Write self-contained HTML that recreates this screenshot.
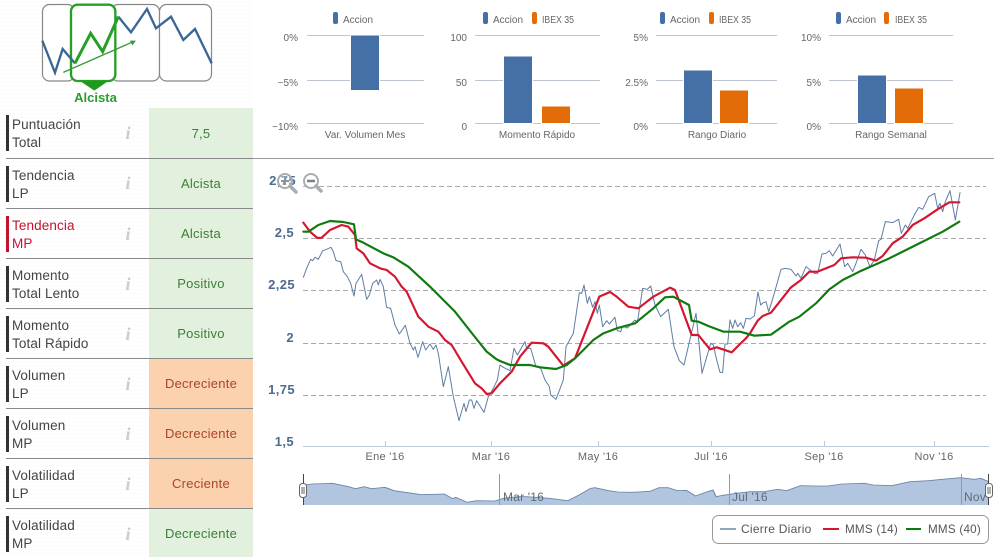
<!DOCTYPE html>
<html><head><meta charset="utf-8"><style>
html,body{margin:0;padding:0;background:#fff;width:996px;height:557px;overflow:hidden}
svg{display:block;font-family:"Liberation Sans",sans-serif}
.l{font-size:13.5px;fill:#444;letter-spacing:.12px}
.r{fill:#c0142f}
.v{font-size:13px;text-anchor:middle;letter-spacing:.25px}
.g{fill:#3c7f36}.o{fill:#a9452c}
.i{font-family:"Liberation Serif",serif;font-style:italic;font-weight:bold;font-size:18px;fill:#ccc;text-anchor:middle}
.m{font-size:10px;fill:#666}
.e{text-anchor:end}.c{text-anchor:middle}
.y{font-size:13px;font-weight:bold;fill:#4d6b8e;text-anchor:end;letter-spacing:.4px}
.x{font-size:11px;fill:#666;text-anchor:middle;letter-spacing:.3px}
.t{font-size:12px;fill:#555;letter-spacing:.25px}
</style></head><body>
<svg width="996" height="557" viewBox="0 0 996 557" xmlns="http://www.w3.org/2000/svg">
<defs><pattern id="d" width="4" height="4" patternUnits="userSpaceOnUse"><rect x="1" y="1" width="1" height="1" fill="#f3f3f3"/></pattern></defs>
<rect x="0" y="0" width="253" height="557" fill="url(#d)"/>

<!-- top icon -->
<g fill="#fff" stroke="#888" stroke-width="1.2">
<rect x="42.5" y="4.5" width="32" height="76.500" rx="7"/>
<rect x="111" y="4.500" width="48.500" height="76.500" rx="7"/>
<rect x="159.500" y="4.500" width="52" height="76.500" rx="7"/>
</g>
<g transform="scale(.33333)" fill="none" stroke-linejoin="miter">
<rect x="213" y="14" width="133" height="229" rx="20" fill="#fff" stroke="#25a025" stroke-width="7"/>
<path d="M127,122 165,218 188,147 225,190M355,50 393,97 441,27 468,85 513,50 550,120 585,87 635,190" stroke="#3a6796" stroke-width="7"/>
<path d="M225,190 272,100 308,155 355,50" stroke="#25a025" stroke-width="9"/>
<path d="M190,217 400,125" stroke="#3a9a3a" stroke-width="4"/>
<path d="M408,122 390,122 397,136z" fill="#3a9a3a"/>
<path d="M240,243 325,243 283,272z" fill="#1f9a1f"/>
</g>
<text x="95.500" y="102" font-size="13" font-weight="bold" fill="#2d9a2d" text-anchor="middle">Alcista</text>

<!-- value cells -->
<rect x="149" y="108" width="104" height="250" fill="#e2f0de"/>
<rect x="149" y="358" width="104" height="150" fill="#fcd1ae"/>
<rect x="149" y="508" width="104" height="49" fill="#e2f0de"/>

<g stroke="#8a8a8a" stroke-width="1">
<path d="M6,158.500H253M6,208.500H253M6,258.500H253M6,308.500H253M6,358.500H253M6,408.500H253M6,458.500H253M6,508.500H253"/>
<path d="M253,158.500H994" stroke="#999"/>
</g>
<g fill="#333">
<rect x="6" y="115" width="3" height="36"/><rect x="6" y="166" width="3" height="36"/>
<rect x="6" y="266" width="3" height="36"/><rect x="6" y="316" width="3" height="36"/>
<rect x="6" y="366" width="3" height="36"/><rect x="6" y="416" width="3" height="36"/>
<rect x="6" y="466" width="3" height="36"/><rect x="6" y="516" width="3" height="36"/>
</g>
<rect x="6" y="216" width="3" height="36" fill="#c0142f"/>

<text class="l" x="12" y="129">Puntuación</text><text class="l" x="12" y="147">Total</text>
<text class="l" x="12" y="180">Tendencia</text><text class="l" x="12" y="198">LP</text>
<text class="l r" x="12" y="230">Tendencia</text><text class="l r" x="12" y="248">MP</text>
<text class="l" x="12" y="280">Momento</text><text class="l" x="12" y="298">Total Lento</text>
<text class="l" x="12" y="330">Momento</text><text class="l" x="12" y="348">Total Rápido</text>
<text class="l" x="12" y="380">Volumen</text><text class="l" x="12" y="398">LP</text>
<text class="l" x="12" y="430">Volumen</text><text class="l" x="12" y="448">MP</text>
<text class="l" x="12" y="480">Volatilidad</text><text class="l" x="12" y="498">LP</text>
<text class="l" x="12" y="530">Volatilidad</text><text class="l" x="12" y="548">MP</text>

<g>
<text class="i" x="128" y="139">i</text><text class="i" x="128" y="189">i</text><text class="i" x="128" y="240">i</text>
<text class="i" x="128" y="290">i</text><text class="i" x="128" y="340">i</text><text class="i" x="128" y="390">i</text>
<text class="i" x="128" y="440">i</text><text class="i" x="128" y="490">i</text><text class="i" x="128" y="540">i</text>
</g>

<text class="v g" x="201" y="138">7,5</text>
<text class="v g" x="201" y="188">Alcista</text>
<text class="v g" x="201" y="238">Alcista</text>
<text class="v g" x="201" y="288">Positivo</text>
<text class="v g" x="201" y="338">Positivo</text>
<text class="v o" x="201" y="388">Decreciente</text>
<text class="v o" x="201" y="438">Decreciente</text>
<text class="v o" x="201" y="488">Creciente</text>
<text class="v g" x="201" y="538">Decreciente</text>

<!-- mini charts -->
<g stroke="#bcc5d0" stroke-width="1">
<path d="M307,35.500H424M307,80.500H424M307,123.500H424"/>
<path d="M475,35.500H600M475,80.500H600M475,123.500H600"/>
<path d="M656,35.500H777M656,80.500H777M656,123.500H777"/>
<path d="M829,35.500H953M829,80.500H953M829,123.500H953"/>
</g>
<g stroke="#fff" stroke-width="1">
<g fill="#4470a5">
<rect x="350.500" y="35" width="29" height="55.500"/>
<rect x="503.500" y="56" width="29" height="67.500"/>
<rect x="683.500" y="70" width="29" height="53.500"/>
<rect x="857.500" y="75" width="29" height="48.500"/>
</g>
<g fill="#e36c09">
<rect x="541.500" y="106" width="29" height="17.500"/>
<rect x="719.500" y="90" width="29" height="33.500"/>
<rect x="894.500" y="88" width="29" height="35.500"/>
</g>
</g>
<g fill="#4470a5">
<rect x="333" y="12" width="5" height="12" rx="2"/><rect x="483" y="12" width="5" height="12" rx="2"/>
<rect x="660" y="12" width="5" height="12" rx="2"/><rect x="836" y="12" width="5" height="12" rx="2"/>
</g>
<g fill="#e36c09">
<rect x="532" y="12" width="5" height="12" rx="2"/><rect x="709" y="12" width="5" height="12" rx="2"/><rect x="884" y="12" width="5" height="12" rx="2"/>
</g>
<text class="m" x="343" y="23">Accion</text>
<text class="m" x="493" y="23">Accion</text><text class="m" x="542" y="23" textLength="32" lengthAdjust="spacingAndGlyphs">IBEX 35</text>
<text class="m" x="670" y="23">Accion</text><text class="m" x="719" y="23" textLength="32" lengthAdjust="spacingAndGlyphs">IBEX 35</text>
<text class="m" x="846" y="23">Accion</text><text class="m" x="895" y="23" textLength="32" lengthAdjust="spacingAndGlyphs">IBEX 35</text>

<text class="m e" x="298" y="41">0%</text><text class="m e" x="298" y="86">−5%</text><text class="m e" x="298" y="130">−10%</text>
<text class="m e" x="467" y="41">100</text><text class="m e" x="467" y="86">50</text><text class="m e" x="467" y="130">0</text>
<text class="m e" x="648" y="41">5%</text><text class="m e" x="648" y="86">2.5%</text><text class="m e" x="648" y="130">0%</text>
<text class="m e" x="821" y="41">10%</text><text class="m e" x="821" y="86">5%</text><text class="m e" x="821" y="130">0%</text>
<text class="m c" x="365" y="138">Var. Volumen Mes</text>
<text class="m c" x="537" y="138">Momento Rápido</text>
<text class="m c" x="717" y="138">Rango Diario</text>
<text class="m c" x="891" y="138">Rango Semanal</text>

<!-- main grid -->
<g stroke="#aaa" stroke-width="1" stroke-dasharray="5,3">
<path d="M303,186.500H986M303,238.500H986M303,290.500H986M303,343.500H986M303,395.500H986"/>
</g>
<path d="M303,446.500H989M385.500,441V446M491.500,441V446M598.500,441V446M711.500,441V446M824.500,441V446M934.500,441V446" stroke="#bccbdc" fill="none"/>

<text class="y" x="296" y="185">2,75</text>
<text class="y" x="294" y="237">2,5</text>
<text class="y" x="295" y="289">2,25</text>
<text class="y" x="294" y="342">2</text>
<text class="y" x="295" y="394">1,75</text>
<text class="y" x="294" y="446">1,5</text>
<text class="x" x="385" y="460">Ene '16</text>
<text class="x" x="491" y="460">Mar '16</text>
<text class="x" x="598" y="460">May '16</text>
<text class="x" x="711" y="460">Jul '16</text>
<text class="x" x="824" y="460">Sep '16</text>
<text class="x" x="934" y="460">Nov '16</text>

<!-- blue -->
<g fill="none" stroke-linejoin="round" stroke-linecap="round">
<g stroke="#5f7da3" stroke-width="3">
<path transform="translate(260,170) scale(.33333)" d="M130,322 140,295 152,268 158,272 165,262 175,268 188,242 200,238 213,232 220,245 228,272 242,275 250,305 262,320 272,340 282,378 288,340 305,313 320,388 328,375 338,340 350,330 355,345 360,328 370,350 380,412 392,415 405,465 418,492 436,466 450,520 460,540 465,530 474,562 488,515 497,540 510,522 520,538 528,525 535,550 550,650 565,590 580,680 597,752 612,700 618,725 628,690 635,690 642,715 650,692 672,727 685,680 700,655 712,630 720,585"/>
<path transform="translate(500,170) scale(.33333)" d="M0,585 10,592 30,602 42,535 52,555 75,515 80,535 92,535 108,590 122,595 135,630 148,650 152,675 168,688 190,630 198,530 220,490 238,368 245,370 252,345 262,400 268,380 278,412 285,395 292,430 298,405 308,470 320,452 328,462 345,442 352,482 362,485 368,468 382,474 405,450 412,458 428,355 442,358 452,348 465,405 482,440 505,418 522,530 538,572 552,585 588,430 606,610 632,520 640,525 650,570 660,607 668,607 675,522 683,522 690,450 698,475 705,450 713,470 722,458 730,475 738,445"/>
<path transform="translate(746,170) scale(.33333)" d="M0,445 12,447 25,438 36,366 44,405 52,398 60,395 68,425 82,380 105,298 118,295 135,298 150,318 155,310 165,325 180,290 195,302 205,310 215,310 228,252 240,250 250,242 260,258 282,222 296,290 305,280 320,305 330,280 345,238 358,255 372,290 385,270 398,212 405,208 418,155 440,158 458,148 466,190 478,165 485,175 505,135 518,112 530,118 548,80 566,70 575,115 582,100 590,125 598,95 612,62 628,150 642,68"/>
</g>
<g stroke="#d3172f" stroke-width="6.500">
<path transform="translate(260,170) scale(.33333)" d="M130,158 150,185 172,204 185,203 210,180 245,165 265,170 285,195 290,235 310,250 330,280 360,295 380,300 405,320 425,350 440,365 475,440 505,470 535,485 555,510 575,525 605,575 645,640 665,655 680,672 695,670 720,640"/>
<path transform="translate(500,170) scale(.33333)" d="M0,640 35,605 60,560 95,518 130,520 145,530 190,587 225,565 298,380 330,366 350,380 385,410 415,415 460,380 510,353 525,360 575,495 595,495 630,538 650,532 695,547 720,522 738,505"/>
<path transform="translate(746,170) scale(.33333)" d="M0,505 12,490 35,452 50,438 75,428 135,352 165,330 190,305 215,305 265,285 285,265 320,262 360,263 390,272 410,258 440,220 470,200 500,165 535,145 575,118 610,97 640,97"/>
</g>
<g stroke="#0f7a0f" stroke-width="6.500">
<path transform="translate(260,170) scale(.33333)" d="M130,185 145,185 175,165 210,153 250,156 282,163 288,208 310,218 370,250 400,262 445,290 510,350 585,425 640,495 680,545 710,568 720,573"/>
<path transform="translate(500,170) scale(.33333)" d="M0,573 30,585 90,585 120,592 168,597 200,585 225,565 280,510 310,490 350,475 405,460 460,415 495,382 520,380 567,405 575,452 595,455 625,468 670,485 720,485 738,490"/>
<path transform="translate(746,170) scale(.33333)" d="M0,490 25,497 75,494 130,455 160,440 210,400 250,358 290,330 340,305 430,265 510,225 590,185 640,155"/>
</g>
</g>

<!-- zoom icons -->
<g fill="none">
<g stroke="#a9adb0" stroke-width="2"><circle cx="285" cy="181" r="7" fill="#fff" fill-opacity=".35"/><circle cx="311" cy="181" r="7" fill="#fff"/></g>
<g stroke="#a9adb0" stroke-width="3.500" stroke-linecap="round"><path d="M290,186 296,192M316,186 321,191"/></g>
<path d="M281,181H289M285,177V185" stroke="#8a949c" stroke-width="2"/>
<path d="M307,181H315" stroke="#7a8288" stroke-width="2.500"/>
</g>

<!-- navigator -->
<g transform="translate(280,450) scale(.45663,.33333)">
<path d="M52,165V105L70,102 115,100 150,110 165,116 185,110 200,116 230,112 250,122 280,128 310,134 360,132 378,146 385,142 410,157 430,152 470,153 490,145 520,140 540,140 590,145 630,152 655,135 680,115 690,113 720,122 740,126 770,127 810,124 830,113 850,113 870,122 890,121 910,138 930,128 948,120 955,140 970,136 1000,130 1030,125 1060,125 1090,118 1110,122 1140,107 1175,108 1200,108 1230,102 1280,100 1300,105 1340,107 1380,95 1420,92 1450,88 1490,83 1520,88 1535,85 1552,95V165z" fill="#b1c5de" stroke="none"/>
<path d="M52,105L70,102 115,100 150,110 165,116 185,110 200,116 230,112 250,122 280,128 310,134 360,132 378,146 385,142 410,157 430,152 470,153 490,145 520,140 540,140 590,145 630,152 655,135 680,115 690,113 720,122 740,126 770,127 810,124 830,113 850,113 870,122 890,121 910,138 930,128 948,120 955,140 970,136 1000,130 1030,125 1060,125 1090,118 1110,122 1140,107 1175,108 1200,108 1230,102 1280,100 1300,105 1340,107 1380,95 1420,92 1450,88 1490,83 1520,88 1535,85 1552,95" fill="none" stroke="#6a85a6" stroke-width="2.500"/>
</g>
<path d="M499.500,474V505M729.500,474V505M961.500,474V505" stroke="#8c99a8" stroke-width="1"/>
<g font-size="12" fill="#5f6b78" letter-spacing=".2">
<text x="503" y="501">Mar '16</text><text x="732" y="501">Jul '16</text><text x="964" y="501">Nov</text><text x="985" y="501">'</text>
</g>
<path d="M303.500,474V505M988.500,474V505" stroke="#444" stroke-width="1"/>
<g fill="#fff" stroke="#666" stroke-width="1">
<rect x="299.500" y="483.500" width="7" height="14" rx="3"/>
<rect x="985.500" y="483.500" width="7" height="14" rx="3"/>
</g>
<path d="M302,487V494M304,487V494M988,487V494M990,487V494" stroke="#666" stroke-width="1"/>

<!-- legend -->
<rect x="712.500" y="515.500" width="276" height="28" rx="6" fill="#fff" stroke="#999"/>
<path d="M720,529H736" stroke="#8fa5be" stroke-width="2"/>
<path d="M823,529H839" stroke="#d3172f" stroke-width="2"/>
<path d="M906,529H921" stroke="#0f7a0f" stroke-width="2"/>
<text class="t" x="741" y="533">Cierre Diario</text>
<text class="t" x="845" y="533" textLength="53" lengthAdjust="spacingAndGlyphs">MMS (14)</text>
<text class="t" x="928" y="533" textLength="53" lengthAdjust="spacingAndGlyphs">MMS (40)</text>
</svg>
</body></html>
